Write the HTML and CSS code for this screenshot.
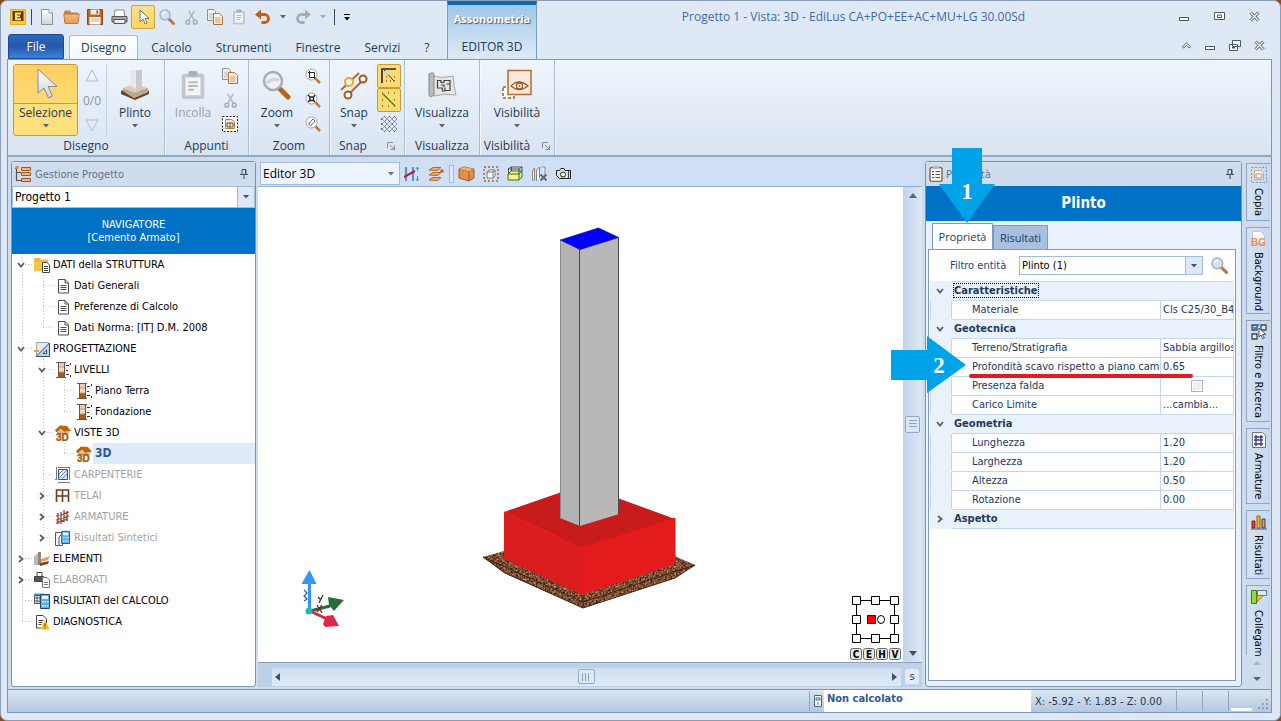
FILE: index.html
```html
<!DOCTYPE html>
<html lang="it">
<head>
<meta charset="utf-8">
<title>Progetto 1 - Vista: 3D - EdiLus</title>
<link rel="stylesheet" href="styles.css">
</head>
<body>
<svg class="defs" aria-hidden="true">
  <defs>
    <linearGradient id="gy" x1="0" y1="0" x2="0" y2="1"><stop offset="0" stop-color="#fff"/><stop offset="1" stop-color="#cfd3d8"/></linearGradient>
    <linearGradient id="gf" x1="0" y1="0" x2="0" y2="1"><stop offset="0" stop-color="#f4bd80"/><stop offset="1" stop-color="#e39a52"/></linearGradient>
    <symbol id="cursor" viewBox="0 0 16 16"><path d="M5 1v12l3-3 2.200 5 2-1-2.200-4.600h4z" fill="#fff" stroke="#5d6470" stroke-width=".9"/></symbol>
    <symbol id="lens" viewBox="0 0 16 16"><path d="M9.500 9.500l5 5" stroke="#c07a34" stroke-width="3" stroke-linecap="round"/><circle cx="6" cy="6" r="5" fill="#cfe4f5" stroke="#a9b4c0" stroke-width="1.500"/><path d="M3 5.500q1-2.500 3.500-2.500" stroke="#fff" stroke-width="1.500" fill="none"/></symbol>
    <symbol id="cut" viewBox="0 0 16 16"><path d="M5 1l6 10M11 1L5 11" stroke="#b3b8be" stroke-width="1.600"/><circle cx="4" cy="13" r="2" fill="none" stroke="#a6abb1" stroke-width="1.500"/><circle cx="12" cy="13" r="2" fill="none" stroke="#a6abb1" stroke-width="1.500"/></symbol>
    <symbol id="copy" viewBox="0 0 16 16"><path d="M.5.5h6l2 2v9h-8z" fill="#f1f1f2" stroke="#8e9196"/><path d="M2 5h4M2 7h4M2 9h4" stroke="#b8bbc0"/><path d="M6.500 4.500h6l3 3v8h-9z" fill="#fdf1e6" stroke="#b4713a"/><path d="M8 9h5.500M8 11h5.500M8 13h5.500" stroke="#d79a66"/></symbol>
    <symbol id="paste" viewBox="0 0 16 16"><rect x="2" y="2" width="12" height="13.500" rx="1.500" fill="#c4c8ce"/><path d="M4 4h8v9.500H4z" fill="#f4f5f7"/><rect x="5.500" y=".5" width="5" height="3" rx="1" fill="#aab0b7"/><path d="M5.500 6.500h5M5.500 8.500h5M5.500 10.500h3" stroke="#b5bac1"/></symbol>
    <symbol id="doc" viewBox="0 0 16 16"><path d="M3.500 1.500h6.500l3.500 3.500v10h-10z" fill="#fff" stroke="#4d4d4d"/><path d="M10 1.500V5h3.500" fill="none" stroke="#4d4d4d"/><path d="M5.500 7.500h6M5.500 9.500h6M5.500 11.500h6" stroke="#4d4d4d"/></symbol>
    <symbol id="level" viewBox="0 0 16 16"><path d="M3 1h7v4H3z" fill="#e6cfb6"/><path d="M3 5h7v5H3z" fill="#efdcc8"/><path d="M3 10h7v5H3z" fill="#a9590f"/><path d="M3 5h7M3 10h7" stroke="#c99a6c"/><path d="M3.500 1v14M9.500 1v14M1 .5h10M1 15.500h10" stroke="#6b5446"/><path d="M11 3.500h3M11 8.500h2M11 12.500h3M15.500 1v2M15.500 13v2" stroke="#333"/></symbol>
    <symbol id="house" viewBox="0 0 16 16"><path d="M0 5L5 .5l7 .5 4 5-7 1-3-3-3 3H1z" fill="#b9660c"/><path d="M2 7l3-3 3 3v2H2zM9 7l5-1v3H9z" fill="#dfb98f"/><text x="1" y="15.500" class="t3d">3D</text></symbol>
    <symbol id="exp" viewBox="0 0 8 8"><path d="M1 2l3 3.500L7 2" fill="none" stroke="#555f70" stroke-width="1.800"/></symbol>
    <symbol id="col" viewBox="0 0 8 8"><path d="M2 1l3.500 3L2 7" fill="none" stroke="#555f70" stroke-width="1.800"/></symbol>
    <symbol id="drop" viewBox="0 0 8 4"><path d="M1 0h6L4 3.500z" fill="currentColor"/></symbol>
    <symbol id="pin" viewBox="0 0 10 10"><path d="M3 .5h4v5H3zM1 5.500h8M5 5.500V10M6.500 1v4" fill="none" stroke="#3f4d66"/></symbol>
    <symbol id="calc" viewBox="0 0 16 16"><path d="M6.500 1.500h9v14h-9z" fill="#5faee6" stroke="#1c4a80"/><path d="M8 3h6v3H8z" fill="#eaf6ff"/><path d="M8 8h1.500v1.500H8zM10.500 8H12v1.500h-1.500zM13 8h1.500v1.500H13zM8 12h1.500v1.500H8zM10.500 12H12v1.500h-1.500zM13 12h1.500v1.500H13z" fill="#d6efff"/></symbol>
    <symbol id="launch" viewBox="0 0 8 8"><path d="M.5 6V.5H6M3 3l4 4M7.500 3.500v4h-4" fill="none" stroke="#7d8ca0"/></symbol>
    <filter id="grain" x="0" y="0" width="100%" height="100%" color-interpolation-filters="sRGB"><feTurbulence type="fractalNoise" baseFrequency=".55" numOctaves="2" seed="4"/><feColorMatrix values="1 0 0 0 -.02  .9 0 0 0 -.14  .7 0 0 0 -.14  0 0 0 0 1"/><feComposite in2="SourceGraphic" operator="in"/></filter>
  </defs>
</svg>

<div class="window">
<header class="head">
  <div class="head-left">
    <div class="qat">
      <svg width="16" height="16" viewBox="0 0 16 16"><rect x=".5" y=".5" width="15" height="15" fill="#f7d21e" stroke="#d9b21b"/><path d="M2.500 2h11v10h-11z" fill="#6b2d14"/><path d="M5 3.500h6v2H7v1h3v1.700H7v1h4v2H5z" fill="#ffe76b"/></svg>
      <i class="bar"></i>
      <button aria-label="Nuovo"><svg width="16" height="16" viewBox="0 0 16 16"><path d="M2.500.5H10L13.500 4v11.500h-11z" fill="url(#gy)" stroke="#8d939c"/><path d="M10 .5V4h3.500" fill="#fff" stroke="#8d939c"/></svg></button>
      <button aria-label="Apri"><svg width="17" height="16" viewBox="0 0 17 16"><path d="M1 13V3l1-1.500h5l1 2h7V13z" fill="#d08440"/><path d="M.8 5h15.400L15 14.500H2z" fill="url(#gf)" stroke="#b8692a" stroke-width=".8"/></svg></button>
      <button aria-label="Salva"><svg width="16" height="16" viewBox="0 0 16 16"><path d="M.5.5h15v15h-15z" fill="#c0652a" stroke="#93450f"/><path d="M3.500.5h9v5h-9z" fill="#f3ede8"/><path d="M2.500 8h11v7.500h-11z" fill="#fff"/><path d="M4 10h8M4 12h8" stroke="#aaa"/><path d="M9.500 1.500h1.500v3H9.500z" fill="#93450f"/></svg></button>
      <button aria-label="Stampa"><svg width="17" height="16" viewBox="0 0 17 16"><path d="M4 1h9l1 7H3z" fill="#fafafa" stroke="#888"/><path d="M1 7.500h15V13H1z" fill="#a8a8aa" stroke="#555"/><path d="M3 10.500h11v4H3z" fill="#eee" stroke="#555"/></svg></button>
      <button class="on" aria-label="Selezione"><svg width="16" height="16"><use href="#cursor"/></svg></button>
      <button aria-label="Zoom"><svg width="16" height="16"><use href="#lens"/></svg></button>
      <button aria-label="Taglia"><svg width="15" height="15"><use href="#cut"/></svg></button>
      <button aria-label="Copia"><svg width="16" height="16"><use href="#copy"/></svg></button>
      <button aria-label="Incolla"><svg width="16" height="16"><use href="#paste"/></svg></button>
      <button aria-label="Annulla"><svg width="16" height="16" viewBox="0 0 16 16"><path d="M4 5.500h5.500a4 4 0 0 1 0 8H6.500" fill="none" stroke="#c25f13" stroke-width="2.800"/><path d="M0 5.500L6 .5v10z" fill="#c25f13"/></svg></button>
      <svg class="dd" width="8" height="4"><use href="#drop"/></svg>
      <button aria-label="Ripeti"><svg width="16" height="16" viewBox="0 0 16 16"><path d="M12 5.500H6.500a4 4 0 0 0 0 8H9.500" fill="none" stroke="#a8adb5" stroke-width="2.800"/><path d="M16 5.500L10 .5v10z" fill="#a8adb5"/></svg></button>
      <svg class="dd dim" width="8" height="4"><use href="#drop"/></svg>
      <i class="bar last"></i>
      <svg width="8" height="7" viewBox="0 0 8 7"><path d="M1 .5h6" stroke="#000"/><path d="M1 3h6L4 6.500z"/></svg>
    </div>
    <nav class="tabs">
      <button class="file">File</button>
      <button class="tab active">Disegno</button>
      <button class="tab">Calcolo</button>
      <button class="tab">Strumenti</button>
      <button class="tab">Finestre</button>
      <button class="tab">Servizi</button>
      <button class="tab">?</button>
    </nav>
  </div>
  <div class="context"><b>Assonometria</b><button>EDITOR 3D</button></div>
  <div class="head-right">
    <h1>Progetto 1 - Vista: 3D - EdiLus CA+PO+EE+AC+MU+LG 30.00Sd</h1>
    <div class="wins">
      <div class="winrow">
        <button aria-label="Riduci"><svg width="11" height="11" viewBox="0 0 11 11"><rect x=".5" y="6.500" width="9" height="3" fill="#fff" stroke="#4d5868"/></svg></button>
        <button aria-label="Ingrandisci"><svg width="11" height="11" viewBox="0 0 11 11"><path d="M.5 1.500h10v7H.5zM3.500 4h4v2.500h-4z" fill="#fff" stroke="#4d5868"/></svg></button>
        <button aria-label="Chiudi"><svg width="11" height="11" viewBox="0 0 11 11"><path d="M1.500 1.500l8 8M9.500 1.500l-8 8" stroke="#4d5868" stroke-width="3"/><path d="M1.500 1.500l8 8M9.500 1.500l-8 8" stroke="#fff" stroke-width="1.200"/></svg></button>
      </div>
      <div class="winrow low">
        <button aria-label="Riduci barra"><svg width="11" height="11" viewBox="0 0 11 11"><path d="M1.500 6.500L5.500 3l4 3.500-1 1.500-3-2.500-3 2.500z" fill="#fff" stroke="#4d5868"/></svg></button>
        <button aria-label="Riduci documento"><svg width="11" height="11" viewBox="0 0 11 11"><rect x=".5" y="6.500" width="9" height="3" fill="#fff" stroke="#4d5868"/></svg></button>
        <button aria-label="Ripristina documento"><svg width="12" height="11" viewBox="0 0 12 11"><path d="M3.500.5h8v6h-8zM.5 4.500h8v6h-8z" fill="#fff" stroke="#4d5868"/><path d="M3 7h3v1.500H3z" fill="#4d5868"/></svg></button>
        <button aria-label="Chiudi documento"><svg width="11" height="11" viewBox="0 0 11 11"><path d="M1.500 1.500l8 8M9.500 1.500l-8 8" stroke="#4d5868" stroke-width="3"/><path d="M1.500 1.500l8 8M9.500 1.500l-8 8" stroke="#fff" stroke-width="1.200"/></svg></button>
      </div>
    </div>
  </div>
</header>

<section class="ribbon">
  <div class="group g1">
    <div class="gbody">
      <button class="big sel"><span class="pic"><svg width="28" height="32" viewBox="0 0 28 32"><path d="M6 1v24l6-5 4.500 10 4-2-4.500-9.500h9z" fill="url(#gy)" stroke="#858a92"/></svg></span><span>Selezione</span><svg class="dd" width="8" height="4"><use href="#drop"/></svg></button>
      <div class="updown"><svg width="14" height="13" viewBox="0 0 14 13"><path d="M7 1l6 11H1z" fill="none" stroke="#b6bcc5"/></svg><span>0/0</span><svg width="14" height="13" viewBox="0 0 14 13"><path d="M7 12L1 1h12z" fill="none" stroke="#b6bcc5"/></svg></div>
      <button class="big"><span class="pic"><svg width="30" height="32" viewBox="0 0 30 32"><path d="M1 22l9-4h12l7 4v3l-14 6L1 25z" fill="#6d4023"/><path d="M3 19l10-4 15 4v4l-14 6L3 22z" fill="#d9cdb9"/><path d="M3 19l11 5 14-5v4l-14 6-11-7z" fill="#b7a98f"/><path d="M10 1h12v17l-6 2-6-3z" fill="#e6e8ea"/><path d="M16 1h6v17l-6 2z" fill="#c6cacf"/></svg></span><span>Plinto</span><svg class="dd" width="8" height="4"><use href="#drop"/></svg></button>
    </div>
    <div class="glabel">Disegno</div>
  </div>
  <div class="group g2">
    <div class="gbody">
      <button class="big off" disabled><span class="pic"><svg width="30" height="30"><use href="#paste"/></svg></span><span>Incolla</span></button>
      <div class="stack">
        <button aria-label="Copia"><svg width="16" height="16"><use href="#copy"/></svg></button>
        <button aria-label="Taglia"><svg width="15" height="15"><use href="#cut"/></svg></button>
        <button aria-label="Incolla speciale"><svg width="16" height="16" viewBox="0 0 16 16"><path d="M.5.5h15v15H.5z" fill="#fff" stroke="#222" stroke-dasharray="2 1.500"/><path d="M3.500 3.500h6l3 2v7h-9z" fill="#fbe6d2" stroke="#c0793f"/><path d="M5 7h6v4H5zM8 7v4" fill="none" stroke="#555"/></svg></button>
      </div>
    </div>
    <div class="glabel">Appunti</div>
  </div>
  <div class="group g3">
    <div class="gbody">
      <button class="big"><span class="pic"><svg width="30" height="30" viewBox="0 0 30 30"><path d="M16 17l10 10" stroke="#b56522" stroke-width="5" stroke-linecap="round"/><circle cx="11" cy="11" r="9" fill="#eef1f4" stroke="#a9adb3" stroke-width="2.500"/><path d="M5 13q4-5 12-3" stroke="#cdd3d9" stroke-width="3" fill="none"/></svg></span><span>Zoom</span><svg class="dd" width="8" height="4"><use href="#drop"/></svg></button>
      <div class="stack">
        <button aria-label="Zoom finestra"><svg width="16" height="16" viewBox="0 0 16 16"><path d="M10.500 10.500l4.500 4.500" stroke="#c07a34" stroke-width="2.500"/><circle cx="6.500" cy="6.500" r="5.500" fill="#fff" stroke="#9aa0a8"/><path d="M4.500 3v6.500h6M3 4.500h6.500v6.500" fill="none" stroke="#222"/></svg></button>
        <button aria-label="Zoom tutto"><svg width="16" height="16" viewBox="0 0 16 16"><path d="M10.500 10.500l4.500 4.500" stroke="#c07a34" stroke-width="2.500"/><circle cx="6.500" cy="6.500" r="5.500" fill="#fff" stroke="#9aa0a8"/><path d="M5 5h3.500v3.500H5zM3 3l2 2M10 3L8.500 5M3 10l2-2M10 10L8.500 8.500" fill="none" stroke="#222" stroke-width="1.400"/></svg></button>
        <button aria-label="Zoom precedente"><svg width="16" height="16" viewBox="0 0 16 16"><path d="M10.500 10.500l4.500 4.500" stroke="#c07a34" stroke-width="2.500"/><circle cx="6.500" cy="6.500" r="5.500" fill="#fff" stroke="#9aa0a8"/><path d="M3.500 8L8 3l2 2-4.500 5z" fill="none" stroke="#666"/></svg></button>
      </div>
    </div>
    <div class="glabel">Zoom</div>
  </div>
  <div class="group g4">
    <div class="gbody">
      <button class="big"><span class="pic"><svg width="30" height="30" viewBox="0 0 30 30"><path d="M2 20L20 3M10 24L25 9" stroke="#b06a34" stroke-width="2"/><circle cx="10" cy="12" r="4" fill="#fffbe0" stroke="#e8a82a" stroke-width="2"/><circle cx="24" cy="9" r="3.500" fill="#fff" stroke="#a35a22" stroke-width="2"/><circle cx="9" cy="25" r="3.500" fill="#fff" stroke="#a35a22" stroke-width="2"/></svg></span><span>Snap</span><svg class="dd" width="8" height="4"><use href="#drop"/></svg></button>
      <div class="stack snapstack">
        <button class="on" aria-label="Orto"><svg width="16" height="16" viewBox="0 0 16 16"><path d="M1 15V1h14" fill="none" stroke="#1d2452" stroke-width="1.600"/><path d="M3 2l10 11" stroke="#234"/><path d="M3 3h9l-5 4z" fill="#dcd6c4"/><path d="M5 13h1M9 13h1M13 9h1M5 9h1M13 13h1" stroke="#222"/></svg></button>
        <button class="on" aria-label="Griglia snap"><svg width="16" height="16" viewBox="0 0 16 16"><path d="M2 2l12 12" stroke="#2f7a20" stroke-width="1.200"/><path d="M1 1h1M7 1h1M13 1h1M1 8h1M13 8h1M1 14h1M7 14h1M13 14h1" stroke="#222"/></svg></button>
        <button aria-label="Griglia"><svg width="16" height="16" viewBox="0 0 16 16"><path d="M0 4l4-4M0 9l9-9M0 14l14-14M3 16L16 3M8 16l8-8M13 16l3-3M0 12l4 4M0 7l9 9M0 2l14 14M3 0l13 13M8 0l8 8M13 0l3 3" stroke="#42536e" stroke-width=".9" stroke-dasharray="1.200 .7"/></svg></button>
      </div>
    </div>
    <div class="glabel"><span>Snap</span><svg class="launch" width="8" height="8"><use href="#launch"/></svg></div>
  </div>
  <div class="group g5">
    <div class="gbody">
      <button class="big"><span class="pic"><svg width="30" height="28" viewBox="0 0 30 28"><path d="M5 5q10 3 21 0 1 12 3 19-12-2-22 1z" fill="#e7e5e0" stroke="#aaa7a1"/><path d="M2 3q5-3 5 1v20q-5 4-5-1z" fill="#b9bcbf" stroke="#84878b"/><path d="M10 9.500h4v2h3v-2h6v10h-5v-3M10.500 9v8h5v3h3M14 14h3v2M19.500 13h4" fill="none" stroke="#444" stroke-width="1.200"/></svg></span><span>Visualizza</span><svg class="dd" width="8" height="4"><use href="#drop"/></svg></button>
    </div>
    <div class="glabel">Visualizza</div>
  </div>
  <div class="group g6">
    <div class="gbody">
      <button class="big"><span class="pic"><svg width="32" height="32" viewBox="0 0 32 32"><path d="M2 18h11v11H2z" fill="#fff" stroke="#a35a22" stroke-width="1.500" stroke-dasharray="3 2"/><path d="M7 1.500h23v24H7z" fill="#fbe9db" stroke="#b56a30" stroke-width="1.500"/><path d="M10 17q8-8 17 0-9 7-17 0z" fill="#fff" stroke="#a35a22" stroke-width="1.300"/><circle cx="18.500" cy="17" r="3" fill="#fff" stroke="#a35a22" stroke-width="1.300"/><circle cx="18.500" cy="17" r="1" fill="#a35a22"/></svg></span><span>Visibilità</span><svg class="dd" width="8" height="4"><use href="#drop"/></svg></button>
    </div>
    <div class="glabel"><span>Visibilità</span><svg class="launch" width="8" height="8"><use href="#launch"/></svg></div>
  </div>
</section>

<main class="work">
  <aside class="panel left">
    <div class="phead"><svg width="17" height="16" viewBox="0 0 17 16"><path d="M1.500 2v12.500H6M1.500 6.500H6M1.500 2.500H0" fill="none" stroke="#5a5048" stroke-width="1.200"/><path d="M.5 0h3v3h-3z" fill="#e0843a"/><path d="M6.500 1.500h9v3h-9zM6.500 6.500h9v3h-9zM6.500 12.500h9v3h-9z" fill="#f4b27c" stroke="#9a5a28"/></svg><span>Gestione Progetto</span><svg class="pin" width="10" height="10"><use href="#pin"/></svg></div>
    <div class="combo proj"><select aria-label="Progetto"><option>Progetto 1</option></select><span class="arrow"><svg width="8" height="4"><use href="#drop"/></svg></span></div>
    <div class="navhead">NAVIGATORE<br>[Cemento Armato]</div>
    <ul class="tree">
      <li><div class="row"><svg class="ch" width="8" height="8"><use href="#exp"/></svg><i></i><svg width="16" height="16" viewBox="0 0 16 16"><path d="M0 3l1-2h5l1 1.500h7V13H0z" fill="#f2b92c"/><path d="M0 5h14v9H0z" fill="#f6c547"/><path d="M8.500 5.500H13l2.500 2.500v7.500h-7z" fill="#fff" stroke="#444"/><path d="M10 9.500h4M10 11.500h4M10 13.500h4" stroke="#444"/></svg><span>DATI della STRUTTURA</span></div>
        <ul>
          <li><div class="row leaf"><i></i><svg width="16" height="16"><use href="#doc"/></svg><span>Dati Generali</span></div></li>
          <li><div class="row leaf"><i></i><svg width="16" height="16"><use href="#doc"/></svg><span>Preferenze di Calcolo</span></div></li>
          <li><div class="row leaf"><i></i><svg width="16" height="16"><use href="#doc"/></svg><span>Dati Norma: [IT] D.M. 2008</span></div></li>
        </ul></li>
      <li><div class="row"><svg class="ch" width="8" height="8"><use href="#exp"/></svg><i></i><svg width="16" height="16" viewBox="0 0 16 16"><path d="M2.500 1.500h12v13h-12z" fill="#e3e9f3" stroke="#9aa5b8"/><path d="M0 10h5" stroke="#e8a81c" stroke-width="2"/><path d="M2 15.500L15.500 2v13.500z" fill="#b9d0f0" stroke="#3c4c68"/><path d="M9 12.500l3.500-3.500v3.500z" fill="#fff" stroke="#3c4c68"/></svg><span>PROGETTAZIONE</span></div>
        <ul>
          <li><div class="row"><svg class="ch" width="8" height="8"><use href="#exp"/></svg><i></i><svg width="16" height="16"><use href="#level"/></svg><span>LIVELLI</span></div>
            <ul>
              <li><div class="row leaf"><i></i><svg width="16" height="16"><use href="#level"/></svg><span>Piano Terra</span></div></li>
              <li><div class="row leaf"><i></i><svg width="16" height="16"><use href="#level"/></svg><span>Fondazione</span></div></li>
            </ul></li>
          <li><div class="row"><svg class="ch" width="8" height="8"><use href="#exp"/></svg><i></i><svg width="16" height="16"><use href="#house"/></svg><span>VISTE 3D</span></div>
            <ul>
              <li><div class="row leaf current"><i></i><svg width="16" height="16"><use href="#house"/></svg><span>3D</span></div></li>
            </ul></li>
          <li><div class="row leaf dim"><i></i><svg width="16" height="16" viewBox="0 0 16 16"><path d="M1.500 0v13M0 12.500h1M3 15.500h12M3 .5h12M14.500 0v13" stroke="#777"/><path d="M3.500 2.500h9v10h-9z" fill="#dbe6fb" stroke="#44506a"/><path d="M4 7l4-4M4 11l8-8M7 12l5-5" stroke="#6f87b5"/></svg><span>CARPENTERIE</span></div></li>
          <li><div class="row dim"><svg class="ch" width="8" height="8"><use href="#col"/></svg><i></i><svg width="16" height="16" viewBox="0 0 16 16"><path d="M1.500 14V2h12v12M7.500 2v12M1.500 8h12" fill="none" stroke="#6b3a2a" stroke-width="1.600"/></svg><span>TELAI</span></div></li>
          <li><div class="row dim"><svg class="ch" width="8" height="8"><use href="#col"/></svg><i></i><svg width="16" height="16" viewBox="0 0 16 16"><path d="M3 4v11M6 3v12M9 1v12M12 2v10M1 7l13-4M1 11l13-4M1 14l12-4" stroke="#8a4634" stroke-width="1.300"/></svg><span>ARMATURE</span></div></li>
          <li><div class="row dim"><svg class="ch" width="8" height="8"><use href="#col"/></svg><i></i><svg width="16" height="16" viewBox="0 0 16 16"><path d="M.5 2.500h7v13h-7zM4 15V7l2-2" fill="#fff" stroke="#555"/><use href="#calc" width="16" height="14"/></svg><span>Risultati Sintetici</span></div></li>
        </ul></li>
      <li><div class="row"><svg class="ch" width="8" height="8"><use href="#col"/></svg><i></i><svg width="16" height="16" viewBox="0 0 16 16"><path d="M0 6l4-4v12H0z" fill="#b9b6b3"/><path d="M4 1h3v13H4z" fill="#8b8682"/><path d="M7 8l9-3-2 4-7 2z" fill="#e89b62"/><path d="M6 12l9-2-1 3-8 2z" fill="#8e3f1c"/></svg><span>ELEMENTI</span></div></li>
      <li><div class="row dim"><svg class="ch" width="8" height="8"><use href="#col"/></svg><i></i><svg width="16" height="16" viewBox="0 0 16 16"><path d="M3 .5h5V4H3zM.5 4.500h9v5h-9z" fill="#555" stroke="#444"/><path d="M3.500 1h4v3h-4z" fill="#fff"/><path d="M8.500 5.500H13l2.500 2.500v7.500h-7z" fill="#fff" stroke="#777"/><path d="M10 10.500h4M10 12.500h4" stroke="#777"/></svg><span>ELABORATI</span></div></li>
      <li><div class="row leaf"><i></i><svg width="16" height="16" viewBox="0 0 16 16"><path d="M0 .5h10v2H0z" fill="#4b9bd8"/><path d="M.5 2.500h8v8h-8zM.5 5h8M.5 8h8M3 2v8M6 2v8" fill="#fff" stroke="#555"/><use href="#calc"/></svg><span>RISULTATI del CALCOLO</span></div></li>
      <li><div class="row leaf"><i></i><svg width="16" height="16" viewBox="0 0 16 16"><path d="M2.500 1.500h6.500l3.500 3.500v9h-10z" fill="#fff" stroke="#444"/><path d="M4.500 6.500h5M4.500 8.500h4M4.500 10.500h3" stroke="#444"/><path d="M11 6l5 9.500H6z" fill="#f7c51e"/><path d="M11 9.500v3M11 13.500v1" stroke="#333"/></svg><span>DIAGNOSTICA</span></div></li>
    </ul>
  </aside>

  <section class="center">
    <div class="viewbar">
      <div class="combo view"><select aria-label="Vista"><option>Editor 3D</option></select><span class="arrow flat"><svg width="8" height="4"><use href="#drop"/></svg></span></div>
      <button aria-label="Quote"><svg width="16" height="16" viewBox="0 0 16 16"><path d="M2 1v14M9 1v14" stroke="#5f8fca" stroke-width="2.200"/><path d="M0 11L11 5" stroke="#b32335" stroke-width="2"/><path d="M13.500 1v4M12 3l1.500-2L15 3M13.500 10v5M12 13l1.500 2 1.500-2" stroke="#4f9a94" fill="none"/></svg></button>
      <button aria-label="Livelli"><svg width="17" height="16" viewBox="0 0 17 16"><path d="M1 4l4-2.500h8L9.500 4.500zM1 9l4-2.500h8L9.500 9.500zM1 14l4-2.500h8L9.500 14.500z" fill="#edae66" stroke="#b06a24"/><path d="M12 5h4M14 3v4" stroke="#a33"/></svg></button>
      <i class="sep"></i>
      <button aria-label="Solido"><svg width="17" height="16" viewBox="0 0 17 16"><path d="M1 3l5-2 10 2v9l-5 3L1 12z" fill="#dc9444" stroke="#9c5c1a"/><path d="M1 3l10 2.500V15M11 5.500L16 3" fill="none" stroke="#9c5c1a"/><path d="M1 3l5-2 10 2-5 2.500z" fill="#edb06a"/></svg></button>
      <button aria-label="Selezione box"><svg width="16" height="16" viewBox="0 0 16 16"><path d="M1 1h14v14H1z" fill="none" stroke="#b0622a" stroke-width="1.500" stroke-dasharray="2 2"/><path d="M4 6l2-2h6v6l-2 2H4zM4 6h6v6M10 6l2-2" fill="#fff" stroke="#777"/></svg></button>
      <button aria-label="Wireframe"><svg width="16" height="16" viewBox="0 0 16 16"><path d="M1 8h11v6H1zM1 8l3-3h11l-3 3M15 5v6l-3 3" fill="#f7f28a" stroke="#38701c"/><path d="M1.500 8V3M4.500 5V1M15 5V1M1 3l3-2h11l-3 2H1M12 3v5" fill="none" stroke="#333" stroke-width=".8"/></svg></button>
      <button aria-label="Rimuovi sezioni"><svg width="17" height="16" viewBox="0 0 17 16"><path d="M1.500 14V5l2-3v12zM5.500 15V4l3-3v11M10 1h4v8" fill="#eee" stroke="#888"/><path d="M9.500 8.500l6 6M15.500 8.500l-6 6" stroke="#666" stroke-width="2"/></svg></button>
      <button aria-label="Fotocamera"><svg width="15" height="12" viewBox="0 0 15 12"><path d="M.5 2.500h3l1.500-2h3l1 2h5.500v8h-11l-3-3z" fill="#ddd" stroke="#222"/><circle cx="7" cy="6.500" r="2.500" fill="#fff" stroke="#222"/><path d="M12.500 3v8" stroke="#444"/></svg></button>
    </div>
    <div class="stage">
      <svg class="scene" viewBox="258 188 645 475" preserveAspectRatio="xMidYMid meet">
        <path d="M483 558L600 524l95 42-20 13-92 30-79-35z" fill="#7a5032" filter="url(#grain)"/>
        <path d="M483 558L583 603 695 566M483 558l22 16 78 35 92-30 20-13M583 596v13" fill="none" stroke="#3a2414"/>
        <path d="M504 513l78-27 93 34-93 29z" fill="#c81c1c"/>
        <path d="M504 513l78 36v47l-78-36z" fill="#d91d1f"/>
        <path d="M582 549l93-30v46l-93 31z" fill="#e31b1c"/>
        <path d="M504 513l78 36 93-30M582 549v47M675 519v46" fill="none" stroke="#f01414"/>
        <path d="M560 240l20 9v278l-20-8z" fill="#b3b3b3"/><path d="M580 249l39-11v277l-39 12z" fill="#b8b8b8"/>
        <path d="M579.500 250v277M618.500 238v277" fill="none" stroke="#484848"/><path d="M560.500 241v277" stroke="#8c8c8c"/>
        <path d="M560.500 241l38-12 20 9.500-38.500 12z" fill="#00f" stroke="#111196" stroke-width=".8"/>
        <path d="M309.500 612V583" stroke="#3595f5" stroke-width="3"/><path d="M309.500 571l7 14h-15z" fill="#3595f5"/>
        <path d="M310 612l20-5" stroke="#2b6b3a" stroke-width="3"/><path d="M344 601l-16-3 1 8 5 6z" fill="#2b6b3a"/>
        <path d="M310 612l17 8" stroke="#d82348" stroke-width="3"/><path d="M339 627l-6-11-7 1-3 8 2 3z" fill="#dc284d"/><circle cx="309" cy="612" r="3.500" fill="#22b5b5"/>
        <path d="M304 591l3 3-3 3 3 3-3 2" fill="none" stroke="#235fa8" stroke-width="1.200"/><path d="M318 598l3 3M323 596l-4 8" stroke="#174d24" stroke-width="1.300"/><path d="M317 606l5 8M322 606l-5 7" stroke="#8b1d24" stroke-width="1.300"/>
        <path d="M856.500 601.500h38v38h-38z" fill="none" stroke="#000"/>
        <path d="M852.500 597.500h8v8h-8zM871.500 597.500h8v8h-8zM890.500 597.500h8v8h-8zM852.500 616.500h8v8h-8zM890.500 616.500h8v8h-8zM852.500 635.500h8v8h-8zM871.500 635.500h8v8h-8zM890.500 635.500h8v8h-8z" fill="#fff" stroke="#000"/>
        <path d="M867.500 616.500h8v8h-8z" fill="#f00" stroke="#400"/><ellipse cx="881" cy="620.500" rx="3.500" ry="4" fill="#fff" stroke="#000"/>
        <g fill="#e9e7e2" stroke="#666"><rect x="850.500" y="649.500" width="11" height="11" rx="2"/><rect x="863.500" y="649.500" width="11" height="11" rx="2"/><rect x="876.500" y="649.500" width="11" height="11" rx="2"/><rect x="889.500" y="649.500" width="11" height="11" rx="2"/></g>
        <g class="chv"><text x="856" y="659">C</text><text x="869" y="659">E</text><text x="882" y="659">H</text><text x="895" y="659">V</text></g>
      </svg>
      <div class="vscroll"><button aria-label="Su"><svg width="10" height="6" viewBox="0 0 10 6"><path d="M1 5h8L5 0z" fill="#56657f"/></svg></button><span class="thumb v"></span><button aria-label="Giù"><svg width="10" height="6" viewBox="0 0 10 6"><path d="M1 1h8L5 6z" fill="#3f4f6b"/></svg></button></div>
    </div>
    <div class="hbar"><div class="hscroll"><button aria-label="Sinistra"><svg width="6" height="10" viewBox="0 0 6 10"><path d="M5 1v8L0 5z" fill="#3f4f6b"/></svg></button><span class="thumb h"></span><button aria-label="Destra"><svg width="6" height="10" viewBox="0 0 6 10"><path d="M1 1v8l5-4z" fill="#3f4f6b"/></svg></button></div><button class="sbtn">s</button></div>
  </section>

  <aside class="panel right">
    <div class="phead"><svg width="14" height="16" viewBox="0 0 14 16"><rect x="1" y="1.500" width="12" height="14" rx="2" fill="#f5f5f3" stroke="#8b6a4d" stroke-width="1.500"/><path d="M4 0h6v3H4z" fill="#b9bcc0"/><path d="M3 5.500h2M3 8.500h2M3 11.500h2M6.500 5.500H11M6.500 8.500H11M6.500 11.500H11" stroke="#555"/></svg><span>Proprietà</span><svg class="pin" width="10" height="10"><use href="#pin"/></svg></div>
    <h2>Plinto</h2>
    <div class="ptabs"><button class="on">Proprietà</button><button>Risultati</button></div>
    <div class="pbody">
      <div class="filter"><label for="ent">Filtro entità</label><div class="combo ent"><select id="ent"><option>Plinto (1)</option></select><span class="arrow"><svg width="8" height="4"><use href="#drop"/></svg></span></div><button aria-label="Cerca"><svg width="17" height="17"><use href="#lens"/></svg></button></div>
      <table>
        <colgroup><col class="c1"><col class="c2"><col class="c3"></colgroup>
        <tbody>
        <tr class="cat"><td><svg width="8" height="8"><use href="#exp"/></svg></td><th colspan="2"><span class="focus">Caratteristiche</span></th></tr>
        <tr><td></td><td>Materiale</td><td>Cls C25/30_B4</td></tr>
        <tr class="cat"><td><svg width="8" height="8"><use href="#exp"/></svg></td><th colspan="2">Geotecnica</th></tr>
        <tr><td></td><td>Terreno/Stratigrafia</td><td>Sabbia argillos</td></tr>
        <tr><td></td><td>Profondità scavo rispetto a piano camp</td><td>0.65</td></tr>
        <tr><td></td><td><label for="falda">Presenza falda</label></td><td class="mid"><input type="checkbox" id="falda"></td></tr>
        <tr><td></td><td>Carico Limite</td><td>...cambia...</td></tr>
        <tr class="cat"><td><svg width="8" height="8"><use href="#exp"/></svg></td><th colspan="2">Geometria</th></tr>
        <tr><td></td><td>Lunghezza</td><td>1.20</td></tr>
        <tr><td></td><td>Larghezza</td><td>1.20</td></tr>
        <tr><td></td><td>Altezza</td><td>0.50</td></tr>
        <tr><td></td><td>Rotazione</td><td>0.00</td></tr>
        <tr class="cat"><td><svg width="8" height="8"><use href="#col"/></svg></td><th colspan="2">Aspetto</th></tr>
        </tbody>
      </table>
    </div>
    <svg class="callout one" width="56" height="76" viewBox="0 0 56 76"><path d="M13 0h30v36h13L28 75 0 36h13z" fill="#00a2e8"/><text x="28" y="51">1</text></svg>
    <svg class="callout two" width="76" height="58" viewBox="0 0 76 58"><path d="M0 14h36V0l39 29-39 28V44H0z" fill="#00a2e8"/><text x="48" y="37">2</text></svg>
    <svg class="callout line" width="224" height="6" viewBox="0 0 224 6"><path d="M2 3h220" stroke="#e11b24" stroke-width="4" stroke-linecap="round"/></svg>
  </aside>

  <nav class="side">
    <button class="s1"><svg width="16" height="16" viewBox="0 0 16 16"><path d="M.5.5h15v15H.5z" fill="none" stroke="#8b96a8" stroke-dasharray="2 1.500"/><path d="M3.500 3.500h6l3 2v7h-9z" fill="#fdf4ea" stroke="#d0a988"/><path d="M5 7h6v4H5z" fill="none" stroke="#999"/></svg>Copia</button>
    <button class="s2"><svg width="16" height="16" viewBox="0 0 16 16"><path d="M1.500.5h8l4 4v8h-12z" fill="#fff" stroke="#c4c8ce"/><text x="0" y="15" class="bg">BG</text></svg>Background</button>
    <button class="s3"><svg width="16" height="16" viewBox="0 0 16 16"><path d="M1 1h5v5H1zM1 10h5v5H1zM10 1h5v5h-5z" fill="#e8ecf2" stroke="#444" stroke-width="1.300"/><path d="M2 3l2 2 4-5" stroke="#1e8fd0" stroke-width="2" fill="none"/><path d="M8 4v9l2-2 2 4 1.500-1-2-3.500H15z" fill="#fff" stroke="#555"/></svg>Filtro e Ricerca</button>
    <button class="s4"><svg width="14" height="16" viewBox="0 0 14 16"><path d="M.5.500h10l3 3v12H.5z" fill="#fff" stroke="#777"/><path d="M2 5h9M2 8h9M2 12h9M4 3v11M9 3v11" stroke="#3a3a9c" stroke-width="1.400"/></svg>Armature</button>
    <button class="s5"><svg width="16" height="16" viewBox="0 0 16 16"><path d="M1 7h3v7H1z" fill="#e33" stroke="#822"/><path d="M6 2h3v12H6z" fill="#f6b32a" stroke="#a25c10"/><path d="M11 5h3v9h-3z" fill="#f6a32a" stroke="#1d3c80"/><path d="M0 15h16" stroke="#555"/></svg>Risultati</button>
    <button class="s6"><svg width="16" height="16" viewBox="0 0 16 16"><path d="M.5 1.500h5v13h-5z" fill="#8fdc3a" stroke="#3a7a18"/><path d="M6 3v10l7-7z" fill="#f2c02c" stroke="#8a6a10" stroke-width=".7"/><path d="M6.500 1.500h9v5h-9z" fill="#d8eefc" stroke="#678"/></svg>Collegam</button>
    <span class="scrolls"><svg width="8" height="4" viewBox="0 0 8 4"><path d="M0 4h8L4 0z" fill="#a9b5c8"/></svg><svg width="8" height="4" viewBox="0 0 8 4"><path d="M0 0h8L4 4z" fill="#55647e"/></svg></span>
  </nav>
</main>

<footer class="status">
  <span class="spacer"></span>
  <svg width="9" height="13" viewBox="0 0 9 13"><path d="M.5.500h7v11h-7z" fill="#fff" stroke="#3c6f86"/><path d="M2 3h4v2H2zM4 7v3" fill="none" stroke="#3c6f86"/></svg>
  <b>Non calcolato</b>
  <span class="coord">X: -5.92 - Y: 1.83 - Z: 0.00</span>
  <span class="cell"></span><span class="cell"></span><span class="cell chip"></span>
  <svg class="grip" width="12" height="12" viewBox="0 0 12 12"><path d="M9 1h2v2H9zM5 5h2v2H5zM9 5h2v2H9zM1 9h2v2H1zM5 9h2v2H5zM9 9h2v2H9z" fill="#8ea0b8"/></svg>
</footer>
</div>
</body>
</html>
```
FILE: styles.css
```css
* { box-sizing: border-box; }
body { margin: 0; background: #8a4b1c; }
body, button, select, input { font-family: "DejaVu Sans Condensed", "Noto Sans", sans-serif; font-size: 11px; color: #1e395b; }
button { background: none; border: 0; padding: 0; display: flex; align-items: center; justify-content: center; }
svg { flex: none; display: block; writing-mode: horizontal-tb; }
h1, h2, ul { margin: 0; padding: 0; }
.defs { width: 0; height: 0; position: absolute; }
.window { min-height: 100vh; display: flex; flex-direction: column; padding: 0 8px 7px 6px; background: #dfe9f5; border: 1px solid #8a9db5; border-radius: 7px; }

/* title bar and tabs */
.head { display: flex; height: 58px; }
.head, .ribbon { font-family: "Open Sans", sans-serif; }
.head button, .ribbon button { font-family: inherit; font-size: 12px; }
.head-left { width: 440px; display: flex; flex-direction: column; justify-content: space-between; }
.qat { display: flex; align-items: center; height: 32px; padding-left: 3px; }
.qat button { width: 24px; height: 24px; }
.qat .bar { width: 1px; height: 16px; background: #3c4656; margin: 0 3px 0 5px; }
.qat .last { margin: 0 8px 0 3px; }
.qat .on { border: 1px solid #d0a13c; border-radius: 2px; background: linear-gradient(#fbe08a, #ffd65e); }
.dd { color: #566379; margin: 0 4px; }
.dd.dim { color: #a3adbc; }
.tabs { display: flex; align-items: flex-end; height: 25px; padding-left: 1px; }
.tab { flex: none; height: 24px; padding: 0 12px; }
.tabs .file { flex: none; width: 56px; height: 25px; margin-right: 5px; color: #fff; background: linear-gradient(#2c68b8, #2458ad 50%, #3b82dc); border: 1px solid #1c4a94; border-radius: 3px 3px 0 0; }
.tabs .active { background: linear-gradient(#fff, #f3f7fc); border: 1px solid #a4b8d0; border-bottom: 0; border-radius: 3px 3px 0 0; margin-right: 1px; padding: 0 11px; }
.context { width: 90px; border: 1px solid #6fa3cf; border-top: 4px solid #0a68b4; border-bottom: 0; background: linear-gradient(#9cc6e8, #cfe1f2 70%, #dfe9f5); display: flex; flex-direction: column; align-items: center; }
.context b { color: #fff; text-shadow: 1px 1px 1px #45515f; font-size: 11px; line-height: 28px; }
.context button { height: 28px; }
.head-right { flex: 1; display: flex; }
.head-right h1 { flex: 1; text-align: center; font-weight: 400; font-size: 12px; line-height: 32px; color: #3f6aa8; white-space: nowrap; }
.wins { width: 102px; display: flex; flex-direction: column; padding-right: 7px; }
.winrow { display: flex; justify-content: flex-end; gap: 24px; height: 31px; padding-right: 5px; }
.winrow.low { height: 26px; gap: 13px; padding-right: 0; }

/* ribbon */
.ribbon { display: flex; height: 98px; border: 1px solid #7b98bb; border-bottom: 2px solid #93a8c3; background: linear-gradient(#eff5fc, #e6eef8 40%, #d9e4f1); }
.group { display: flex; flex-direction: column; border-right: 1px solid #a9bcd3; box-shadow: 1px 0 0 #f3f8fd; }
.gbody { display: flex; padding: 4px 0 0 5px; height: 77px; }
.glabel { font-size: 12px; line-height: 18px; display: flex; justify-content: center; align-items: center; gap: 20px; }
.big { flex: none; flex-direction: column; justify-content: flex-start; width: 56px; height: 72px; border: 1px solid transparent; }
.big .pic { height: 39px; width: 100%; display: flex; align-items: center; justify-content: center; }
.big .dd { margin-top: 3px; }
.big.sel { width: 65px; border-color: #c79a3c; border-radius: 3px; background: #ffe07c; }
.big.sel .pic { background: linear-gradient(#fbd063, #ffda72); border-bottom: 1px solid #c79a3c; }
.big.off { color: #9aa0a8; }
.g1 { width: 157px; } .g2 { width: 84px; } .g3 { width: 81px; } .g4, .g5, .g6 { width: 75px; }
.g2 .big, .g3 .big { width: 46px; }
.g2 .gbody, .g3 .gbody { padding-right: 4px; }
.g4 .gbody { padding-left: 1px; }
.g5 .gbody, .g6 .gbody { padding-left: 0; }
.g4 .big { width: 46px; }
.g5 .big, .g6 .big { width: 60px; }
.g5 .gbody, .g6 .gbody { justify-content: center; }
.g6 .glabel { gap: 12px; }
.updown { width: 29px; display: flex; flex-direction: column; align-items: center; justify-content: space-between; padding: 5px 0; color: #8b93a0; font-size: 12px; border-right: 1px solid #c5d3e4; }
.stack { flex: 1; display: flex; flex-direction: column; align-items: center; }
.stack button { width: 24px; height: 24px; }
.stack .on { border: 1px solid #c99a3a; border-radius: 2px; background: #ffdc70; }
.snapstack { align-items: flex-start; }

/* work area */
.work { flex: 1; display: flex; border: solid #7b98bb; border-width: 0 1px; background: #cfdcee; padding: 4px 1px 2px 3px; }
.panel { background: #fff; border: 1px solid #7c93b4; border-radius: 3px; display: flex; flex-direction: column; }
.left { width: 245px; }
.phead { height: 24px; display: flex; align-items: center; gap: 3px; padding: 0 6px 0 3px; background: #cfdcee; color: #64748f; }
.pin { margin-left: auto; }
.combo { display: flex; border: 1px solid #a3bad8; background: #fff; }
.combo select { flex: 1; min-width: 0; appearance: none; border: 0; background: none; color: #000; padding: 0 2px; outline: 0; }
.arrow { width: 17px; display: flex; align-items: center; justify-content: center; color: #3d5375; background: #dce8f6; border-left: 1px solid #a3bad8; }
.arrow.flat { background: none; border: 0; color: #66758c; }
.proj { height: 22px; }
.combo.proj select { font-size: 12px; }
.navhead { background: #0072c6; color: #fff; height: 46px; display: flex; align-items: center; justify-content: center; text-align: center; line-height: 13px; }
ul { list-style: none; background: repeating-linear-gradient(#c4c4c4 0 1px, transparent 1px 3px) 10px 0 / 1px calc(100% - 10px) no-repeat; }
.tree { margin-bottom: 40px; color: #000; }
ul ul { margin-left: 21px; }
.row { height: 21px; display: flex; align-items: center; padding-left: 5px; white-space: nowrap; }
.row .ch { background: #fff; }
.row i { width: 9px; height: 1px; background: repeating-linear-gradient(90deg, #c4c4c4 0 1px, transparent 1px 3px); }
.row.leaf i { width: 12px; margin-left: 5px; }
.row span { flex: 1; line-height: 21px; margin-left: 1px; padding-left: 2px; }
.row.dim span { color: #a2a2a2; }
.row.current span { background: #dfeafa; color: #34569a; font-weight: 700; font-size: 12px; }
.t3d { font: 700 10px "Liberation Sans", sans-serif; fill: #a9590f; stroke: #a9590f; stroke-width: .4px; }
.bg { font: 700 10px "Liberation Sans", sans-serif; fill: #f08a60; }

/* centre */
.center { flex: 1; display: flex; flex-direction: column; margin: 0 3px 0 2px; background: #bdd0e8; }
.viewbar { height: 26px; display: flex; align-items: center; gap: 8px; padding-left: 2px; background: #cfe0f6; border-bottom: 1px solid #94aed0; }
.view { width: 140px; height: 23px; background: #edf4fd; margin-right: -4px; }
.combo.view select { font-size: 12px; font-family: "Open Sans", sans-serif; }
.sep { width: 5px; height: 18px; border: 1px solid #a3bad8; background: #dfeaf8; margin: 0 -4px; }
.stage { flex: 1; display: flex; min-height: 0; }
.scene { flex: 1 1 0; min-width: 0; height: auto; background: #fff; }
.chv text { font: 700 10px "DejaVu Sans Condensed", sans-serif; text-anchor: middle; }
.vscroll { width: 19px; display: flex; flex-direction: column; align-items: center; justify-content: space-between; padding: 6px 0; background: linear-gradient(90deg, #c3d4ea, #dde8f5); }
.thumb { border: 1px solid #93a9c9; border-radius: 2px; background: repeating-linear-gradient(#8fa3c0 0 1px, transparent 1px 3px) center / 8px 9px no-repeat #dde8f6; }
.thumb.v { width: 15px; height: 17px; }
.thumb.h { width: 17px; height: 15px; background: repeating-linear-gradient(90deg, #8fa3c0 0 1px, transparent 1px 3px) center / 9px 8px no-repeat #dde8f6; }
.hbar { height: 25px; display: flex; align-items: center; gap: 4px; border-top: 1px solid #8fa3bd; padding: 3px 3px 0 14px; }
.hscroll { flex: 1; height: 18px; display: flex; align-items: center; justify-content: space-between; padding: 0 4px 0 3px; background: linear-gradient(#cfdeef, #e0eaf6); }
.sbtn { width: 14px; height: 15px; border-radius: 2px; background: #e3edf9; }

/* properties */
.right { width: 317px; position: relative; background: #e9f1fb; }
.right h2 { background: #0072c6; color: #fff; text-align: center; font: 700 15px/34px "DejaVu Sans Condensed", "Noto Sans", sans-serif; height: 35px; }
.ptabs { display: flex; align-items: flex-end; padding: 2px 0 0 6px; height: 28px; }
.ptabs button { height: 24px; width: 55px; background: #a9c0de; border: 1px solid #8099bf; border-bottom: 0; font-family: "Open Sans", sans-serif; }
.ptabs .on { background: #fff; height: 26px; width: 61px; }
.pbody { flex: 1; background: #fff; border: 1px solid #8099bf; margin: 0 5px 5px 2px; padding: 6px 1px 0; }
.filter { display: flex; align-items: center; padding: 0 6px 0 20px; height: 19px; margin-bottom: 6px; }
.filter label { width: 69px; color: #1f4478; }
.ent { flex: 1; height: 19px; margin-right: 8px; }
table { width: 100%; table-layout: fixed; border-collapse: collapse; border: 1px solid #c4d6ec; }
.c1 { width: 21px; } .c3 { width: 73px; }
td, th { height: 19px; padding: 0 0 0 2px; border: 1px solid #c4d6ec; white-space: nowrap; overflow: hidden; text-align: left; line-height: 14px; }
td:first-child { background: #e9f1fb; border-top-color: #e9f1fb; border-bottom-color: #e9f1fb; padding: 0 5px; }
td:nth-child(2) { padding-left: 20px; }
tr.cat td, tr.cat th { background: #e9f1fb; border-left-color: #e9f1fb; border-right-color: #e9f1fb; }
.focus { outline: 1px dotted #000; }
td.mid { padding: 0; }
.mid input { appearance: none; display: block; width: 12px; height: 12px; margin: 0 auto; border: 1px solid #a8b4c6; background: #eceff3; box-shadow: inset 0 0 0 1px #fff; }
.callout { position: absolute; }
.callout text { font: 700 23px "Liberation Serif", serif; fill: #fff; text-anchor: middle; }
.one { left: 13px; top: -14px; }
.two { left: -35px; top: 174px; }
.line { left: 43px; top: 211px; }

/* side tabs */
.side { width: 24px; margin-left: 4px; padding-top: 2px; display: flex; flex-direction: column; gap: 6px; }
.side button { flex: none; writing-mode: vertical-rl; justify-content: flex-start; width: 24px; padding-top: 3px; gap: 5px; border: 1px solid #8ea5c6; border-right: 0; background: linear-gradient(90deg, #d5e2f4, #c5d7ef); color: #000; white-space: nowrap; }
.s1 { height: 58px; } .s2 { height: 87px; } .s3 { height: 102px; } .s4 { height: 76px; } .s5 { height: 69px; } .side .s6 { height: 70px; border-bottom: 0; }
.scrolls { display: flex; flex-direction: column; gap: 12px; align-items: center; width: 22px; }

/* status bar */
.status { height: 24px; display: flex; align-items: center; border: 1px solid #7b98bb; background: linear-gradient(#dbe6f3, #b4c7de); }
.spacer { flex: 1; border-right: 1px solid #8ea5c6; height: 20px; margin-right: 4px; }
.status b { width: 207px; margin-left: 1px; padding-left: 3px; height: 22px; line-height: 18px; background: #fff; color: #34569a; }
.coord { width: 145px; padding-left: 4px; }
.cell { width: 26px; height: 20px; border-left: 1px solid #8ea5c6; }
.chip { background: linear-gradient(#fff, #fff) 2px 17px / 21px 3px no-repeat; }
.grip { margin: 5px 2px 0 3px; }
```
